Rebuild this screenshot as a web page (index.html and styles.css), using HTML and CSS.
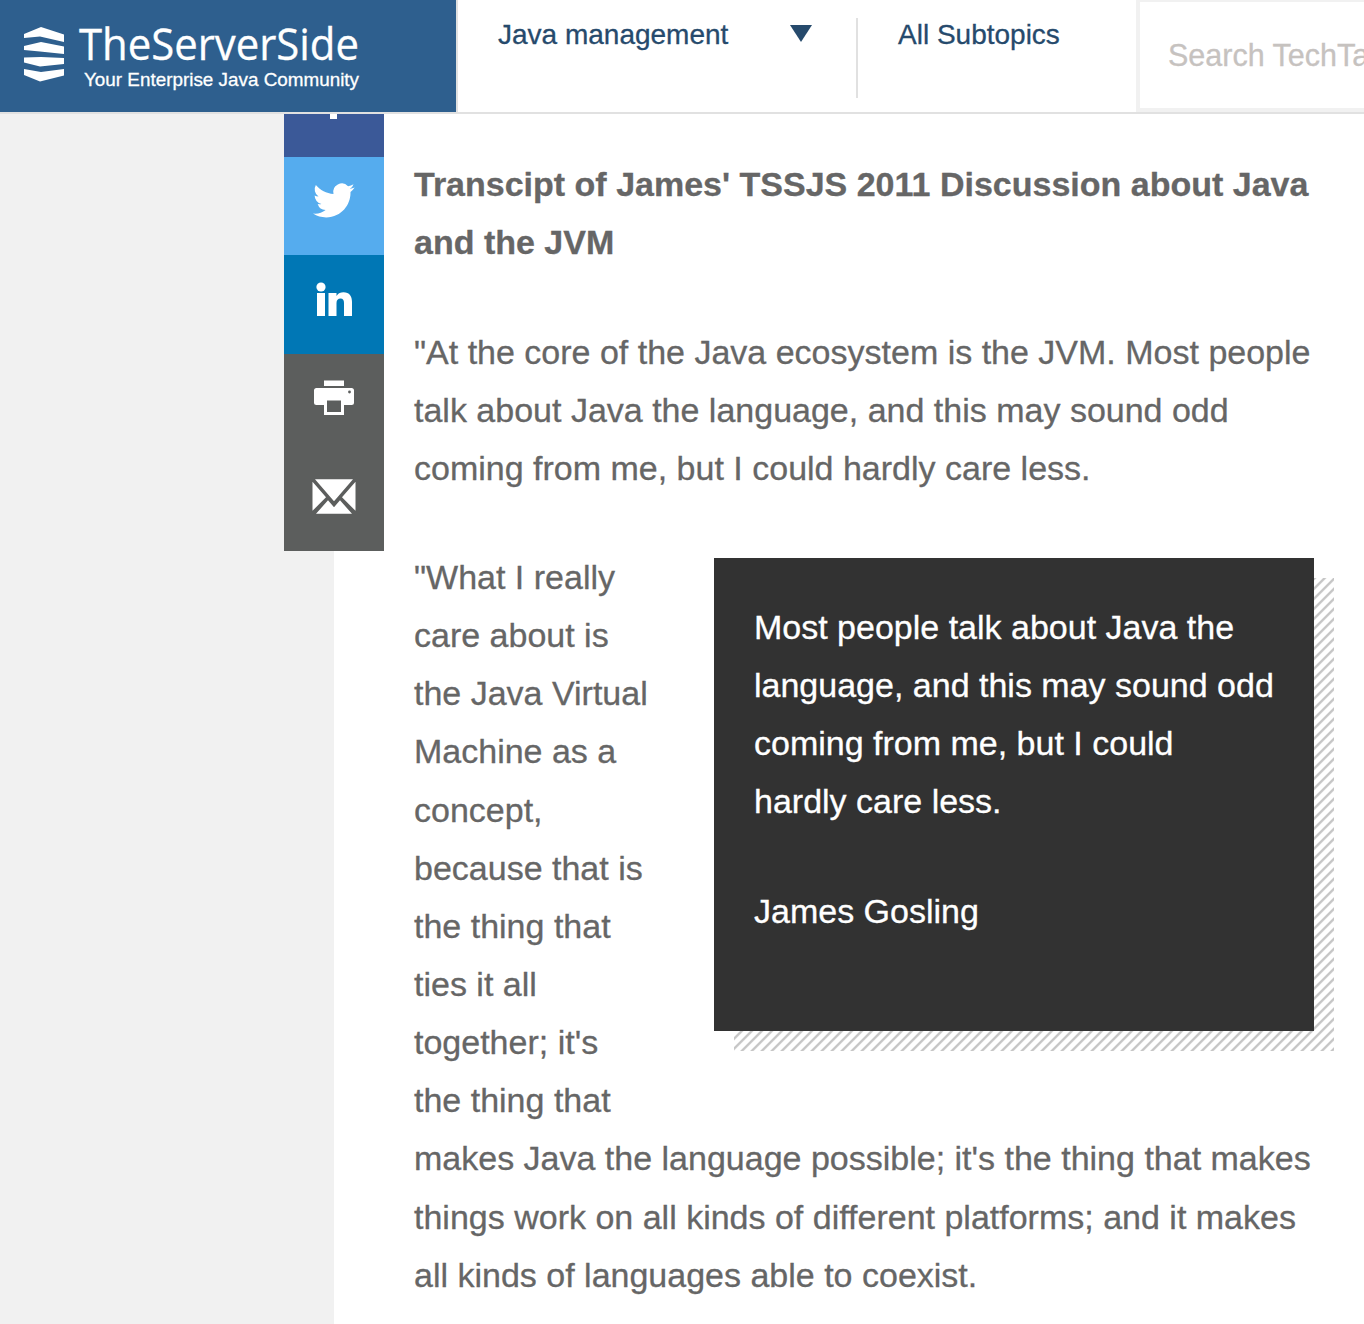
FILE: index.html
```html
<!DOCTYPE html>
<html lang="en">
<head>
<meta charset="utf-8">
<title>TheServerSide</title>
<link rel="stylesheet" href="styles.css">
</head>
<body>
<header class="header">
  <a class="logo">
    <svg width="456" height="112" viewBox="0 0 456 112" fill="#fff">
      <path d="M24 34L41 27l23 7.500v7.500L40 36.500 24 38zM24 46l17-4 23 4.500v7.500l-24-2.500-16-1.500zM24 57.500L41 57l23 1v6l-24 2.500-16-4zM24 69l17 3 23-3v6.500L40 81.500 24 75z"/>
      <text class="brand" x="79" y="60" textLength="280" lengthAdjust="spacingAndGlyphs">TheServerSide</text>
      <text class="tagline" x="84" y="86" textLength="275" lengthAdjust="spacingAndGlyphs">Your Enterprise Java Community</text>
    </svg>
  </a>
  <nav class="nav">
    <div class="topic"><span>Java management</span><svg width="22" height="17" viewBox="0 0 22 17"><path d="M0 0h22L11 17z" fill="#264a6c"/></svg></div>
    <div class="subtopics">All Subtopics</div>
  </nav>
  <div class="search">Search TechTarget</div>
</header>
<div class="page">
  <aside class="share">
    <a class="share-item facebook"><svg width="100" height="98" viewBox="0 0 100 98" fill="#fff"><path d="M46 60V43h-6v-7h6v-5c0-7 4-10 10-10h5v7h-4c-3 0-4 1-4 3v5h8l-1 7h-7v17z"/></svg></a>
    <a class="share-item twitter"><svg width="100" height="98" viewBox="0 0 100 98" fill="#fff"><path transform="translate(29 22.600) scale(1.740)" d="M23.950 4.570a10 10 0 0 1-2.820.77 4.960 4.960 0 0 0 2.160-2.720c-.95.55-2 .95-3.130 1.180a4.920 4.920 0 0 0-8.380 4.480C7.690 8.090 4.070 6.130 1.640 3.160a4.900 4.900 0 0 0 1.520 6.570 4.900 4.900 0 0 1-2.230-.61v.06a4.920 4.920 0 0 0 3.950 4.830 5 5 0 0 1-2.210.08 4.940 4.940 0 0 0 4.600 3.420A9.870 9.870 0 0 1 0 19.540a13.990 13.990 0 0 0 7.550 2.210c9.050 0 14-7.500 14-13.980v-.64a9.900 9.900 0 0 0 2.400-2.560z"/></svg></a>
    <a class="share-item linkedin"><svg width="100" height="98" viewBox="0 0 100 98" fill="#fff"><circle cx="37" cy="32" r="4.600"/><path d="M33 38h8v23h-8zM44.500 38h8v3c2-3 4-3.700 7-3.700 6 0 8.500 4 8.500 9.700v14h-8V48c0-3-1-4.500-3.500-4.500s-4 1.500-4 4.500v13h-8z"/></svg></a>
    <a class="share-item print"><svg width="100" height="98" viewBox="0 0 100 98"><path fill="#fff" d="M40 26.500h20v5.500H40zM32.500 34h35q2.500 0 2.500 2.500v12q0 2.500-2.500 2.500H60v10H40V51h-7.500q-2.500 0-2.500-2.500v-12q0-2.500 2.500-2.500z"/><path fill="#5c5e5d" d="M43 46.500h14V58H43z"/><circle cx="65.500" cy="38" r="1.400" fill="#5c5e5d"/></svg></a>
    <a class="share-item mail"><svg width="100" height="98" viewBox="0 0 100 98" fill="#fff"><path transform="translate(0 -.7)" d="M31 27h38L50 49zM28.500 29.500L42 45 28.500 58.500zM71.500 29.500L58 45l13.500 13.500zM32 61.500L44 48l6 7 6-7 12 13.500z"/></svg></a>
  </aside>
  <main class="article">
    <h2>Transcipt of James' TSSJS 2011 Discussion about Java<br>and the JVM</h2>
    <p>"At the core of the Java ecosystem is the JVM. Most people<br>talk about Java the language, and this may sound odd<br>coming from me, but I could hardly care less.</p>
    <blockquote class="pullquote">
      <p>Most people talk about Java the<br>language, and this may sound odd<br>coming from me, but I could<br>hardly care less.</p>
      <p>James Gosling</p>
    </blockquote>
    <p>"What I really<br>care about is<br>the Java Virtual<br>Machine as a<br>concept,<br>because that is<br>the thing that<br>ties it all<br>together; it's<br>the thing that<br>makes Java the language possible; it's the thing that makes<br>things work on all kinds of different platforms; and it makes<br>all kinds of languages able to coexist.</p>
  </main>
</div>
</body>
</html>
```
FILE: styles.css
```css
* { box-sizing: border-box; }
body {
  margin: 0;
  height: 1324px;
  overflow: hidden;
  background: #f1f1f1;
  font-family: "Liberation Sans", Arial, sans-serif;
  color: #666;
}
.header {
  position: relative;
  z-index: 2;
  display: flex;
  height: 114px;
  overflow: hidden;
  background: #fff;
  border-bottom: 2px solid #e1e1e1;
}
.logo { flex: none; width: 458px; background: #2e5f8e; border-right: 2px solid #e1e1e1; }
.logo svg { display: block; }
.brand { font: 43px "Open Sans", sans-serif; stroke: #fff; stroke-width: .3px; }
.tagline { font: 19px "Liberation Sans", Arial, sans-serif; stroke: #fff; stroke-width: .3px; }
.nav { flex: none; display: flex; width: 678px; padding-top: 18px; color: #264a6c; font-size: 28px; line-height: 34px; white-space: nowrap; -webkit-text-stroke: .3px; }
.topic { display: flex; justify-content: space-between; width: 400px; height: 80px; padding: 0 44px 0 40px; border-right: 2px solid #e1e1e1; }
.topic svg { margin-top: 7px; }
.subtopics { padding-left: 40px; }
.search { flex: none; width: 400px; height: 112px; padding: 36px 0 0 28px; border: solid #f1f1f1; border-width: 2px 4px 4px; color: #c6c2bf; font-size: 30.500px; line-height: 35px; white-space: nowrap; -webkit-text-stroke: .3px; }
.page { display: grid; grid-template-columns: 284px 50px 50px 980px; height: 1210px; }
.share { grid-area: 1 / 2 / 2 / 4; z-index: 1; align-self: start; margin-top: -55px; }
.share-item { display: block; height: 98.500px; }
.share-item svg { display: block; }
.facebook { height: 98px; background: #3b5998; }
.twitter { height: 98px; background: #55acee; }
.linkedin { height: 99px; background: #0077b5; }
.print, .mail { background: #5c5e5d; }
.article {
  grid-area: 1 / 3 / 2 / 5;
  padding: 41.350px 50px 0 80px;
  background: #fff;
  font-size: 34px;
  line-height: 58.140px;
  white-space: nowrap;
  -webkit-text-stroke: .3px;
}
.article h2, .article p { margin: 0 0 51px; }
.article h2 { font-size: 34px; font-weight: bold; }
.article .pullquote {
  position: relative;
  float: right;
  width: 600px;
  height: 473px;
  margin: 10px 0 60px 60px;
  padding: 40px;
  background: #323232;
  color: #fff;
}
.pullquote::after {
  content: "";
  position: absolute;
  z-index: 1;
  inset: 20px -20px -20px 20px;
  background: repeating-linear-gradient(135deg, #c6c6c6 0 1.200px, #fff 2.300px 5.900px, #c6c6c6 7.071px);
  clip-path: polygon(580px 0, 600px 0, 600px 473px, 0 473px, 0 453px, 580px 453px);
}
```
